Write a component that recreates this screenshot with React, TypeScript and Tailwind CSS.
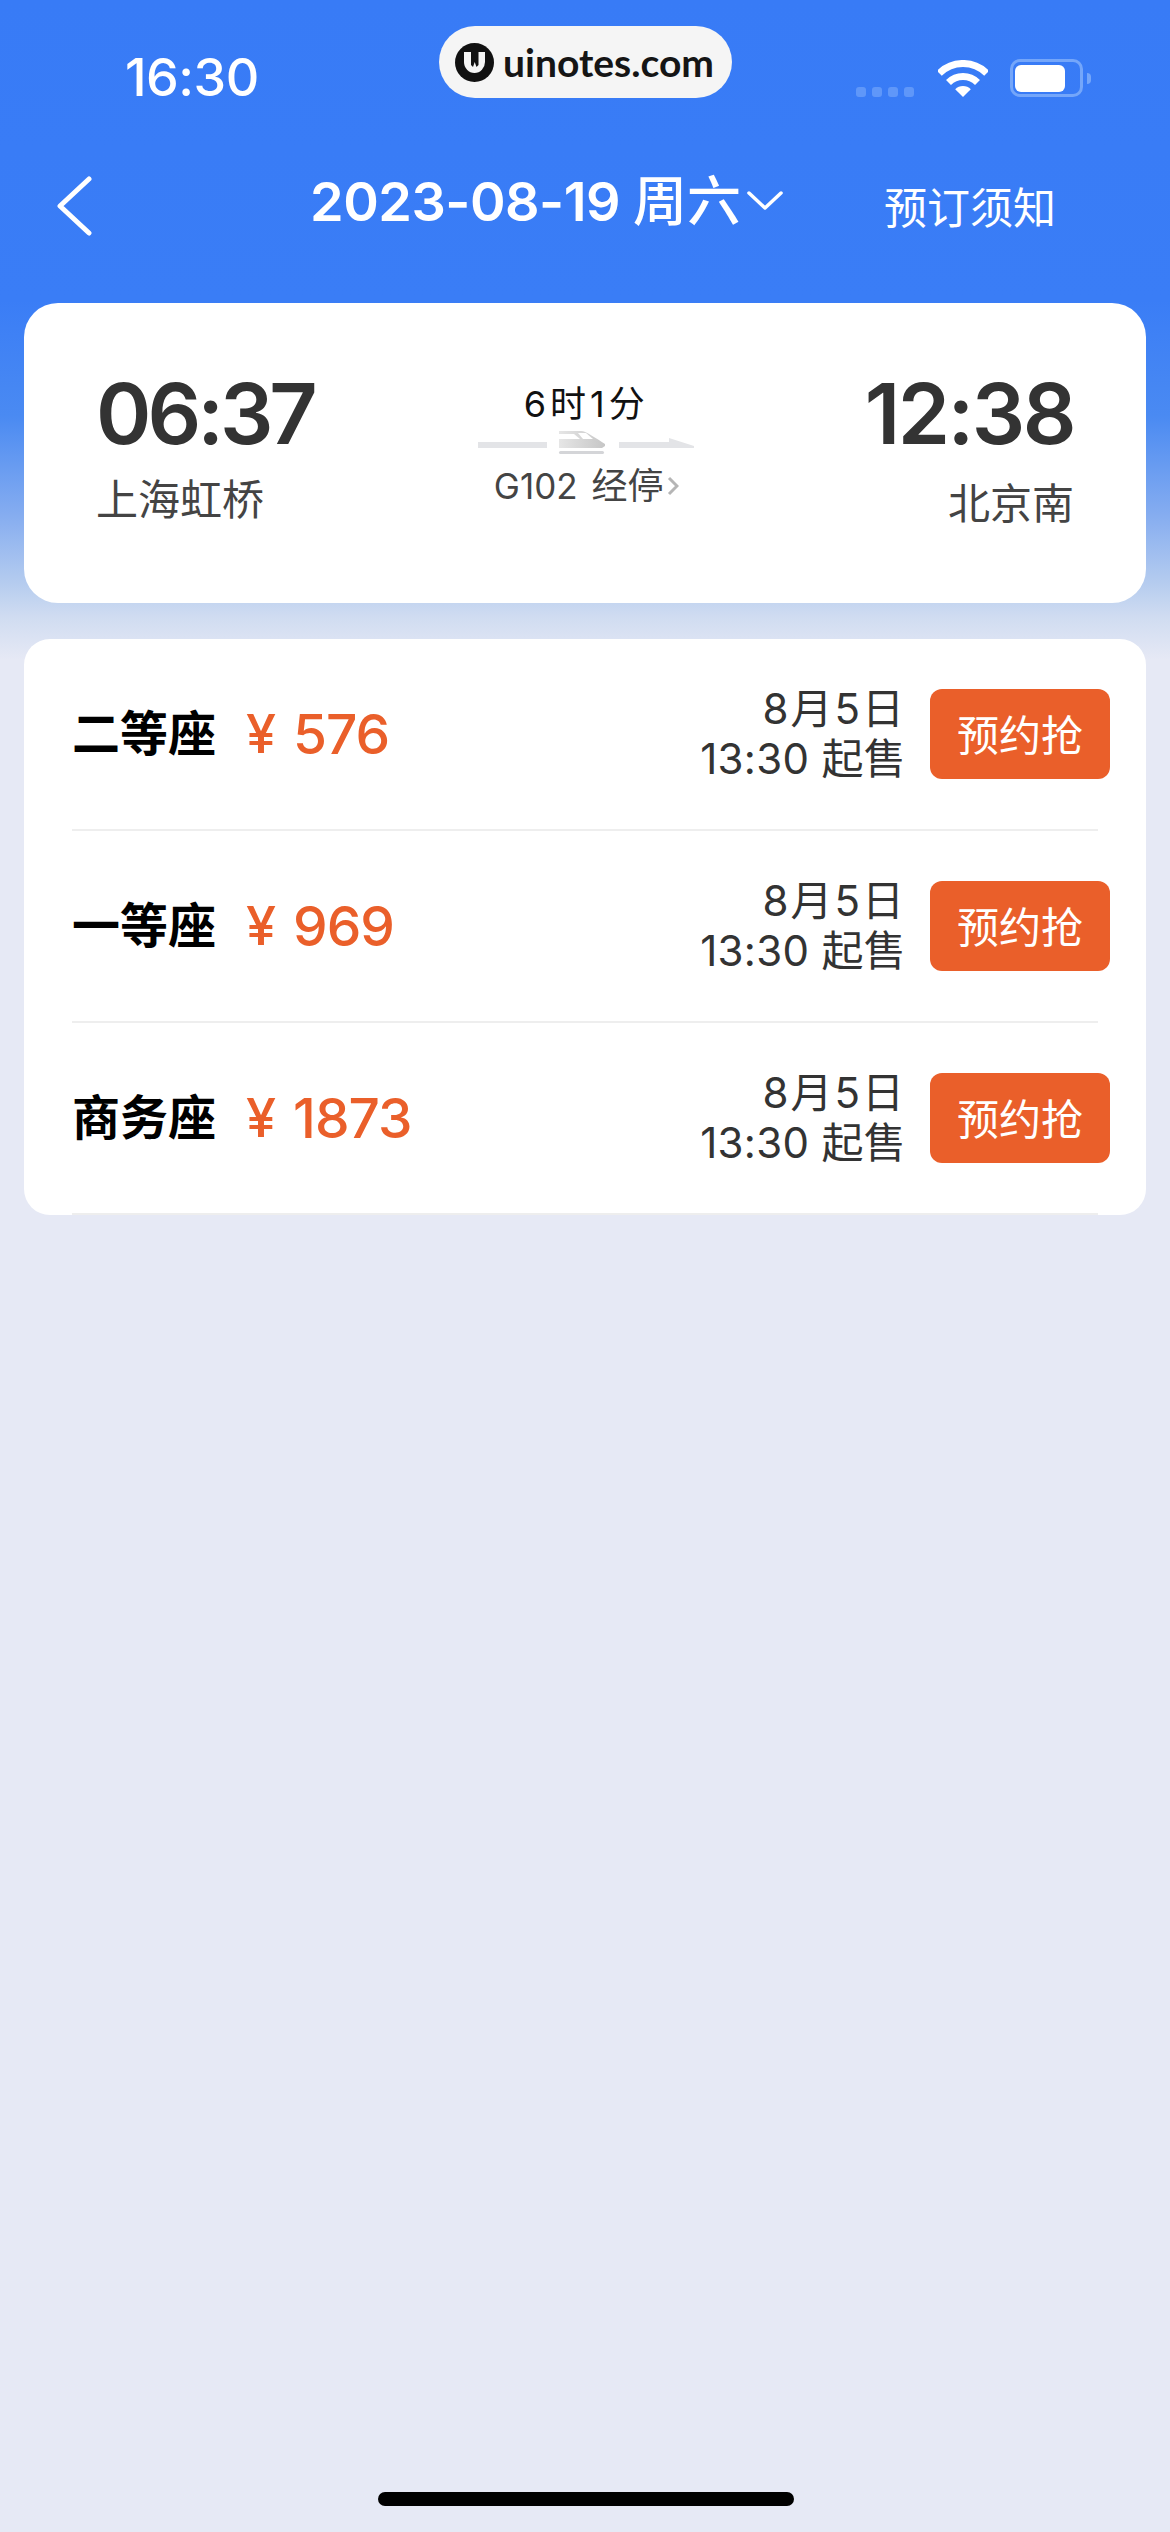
const seats = [
  { name: "二等座", price: "576" },
  { name: "一等座", price: "969" },
  { name: "商务座", price: "1873" },
];

function WifiIcon() {
  return (
    <svg width="50" height="37" viewBox="0 0 50 37" fill="none" stroke="white" strokeWidth="7">
      <path d="M1.3 13.3a33.5 33.5 0 0 1 47.4 0" />
      <path d="M10.5 22.5a20.5 20.5 0 0 1 29 0" />
      <path d="M25 37 17.2 29.2a11 11 0 0 1 15.6 0Z" fill="white" stroke="none" />
    </svg>
  );
}

function TrainIcon() {
  return (
    <svg width="216" height="24" viewBox="0 0 216 24">
      <defs>
        <linearGradient id="train-body" x1="0" x2="1" y1="0" y2="0">
          <stop offset="0" stopColor="#e6e6e6" />
          <stop offset="1" stopColor="#c6c6c6" />
        </linearGradient>
      </defs>
      <rect x="0" y="11" width="69" height="6" fill="#e3e4e7" />
      <path d="M81 0h22c5 0 16 8 24 13v2l-3 2H81Z" fill="url(#train-body)" />
      <path d="M81 3h15l6 5H81Z" fill="#fff" />
      <path d="M100 2h8l7 6h-10Z" fill="#fff" />
      <rect x="81" y="20" width="45" height="3" rx="1.5" fill="#d4d5d8" />
      <path d="M141 11h50V7l25 8v2h-75Z" fill="#e3e4e7" />
    </svg>
  );
}

function LogoMark() {
  return (
    <svg width="39" height="39" viewBox="0 0 39 39">
      <circle cx="19.5" cy="19.5" r="19.5" fill="#111" />
      <path d="M9 9h21v10a10.500 11 0 0 1-21 0Z" fill="#f5f5f5" />
      <path d="M16 9h7.500v13l-2 2-1.800-5-1.700 5-2-2Z" fill="#111" />
    </svg>
  );
}

export default function App() {
  return (
    <div className="relative flex h-[2532px] w-[1170px] flex-col overflow-hidden bg-[linear-gradient(180deg,#387bf6_0px,#3a7df6_300px,#4a8af2_416px,#86adf0_516px,#b5ccef_583px,#d0dcf1_617px,#e6e9f5_660px)] font-['Inter','Noto_Sans_CJK_SC',sans-serif]">
      {/* watermark */}
      <div className="absolute left-[439px] top-[26px] flex h-[72px] w-[293px] items-center gap-[9px] rounded-full bg-[#f5f5f5] pl-[16px]">
        <LogoMark />
        <span className="font-['Lato',sans-serif] text-[39px] font-bold leading-none text-[#151515]">uinotes.com</span>
      </div>

      {/* status bar */}
      <div className="flex h-[150px] items-start justify-between pl-[125px] pr-[79px] pt-[52px]">
        <span className="text-[52px] font-medium leading-[52px] tracking-[-0.5px] text-white">16:30</span>
        <div className="flex items-end pt-[7px]">
          <div className="flex gap-[6px]">
            {[0, 1, 2, 3].map((i) => (
              <div key={i} className="h-[10px] w-[10px] rounded-[3px] bg-[#5f97f9]" />
            ))}
          </div>
          <div className="ml-[24px]">
            <WifiIcon />
          </div>
          <div className="ml-[22px] flex h-[38px] w-[73px] items-center rounded-[10px] border-[3px] border-[#74a6fa] pl-[2px]">
            <div className="h-[27px] w-[50px] rounded-[6px] bg-white" />
          </div>
          <div className="mb-[13px] ml-[4px] h-[11px] w-[4px] rounded-r-full bg-[#74a6fa]" />
        </div>
      </div>

      {/* header */}
      <div className="flex h-[153px] items-start pl-[56px] pt-[26px]">
        <svg width="36" height="60" viewBox="0 0 36 60" fill="none" stroke="white" strokeWidth="5" strokeLinecap="round" strokeLinejoin="round">
          <path d="M33 3 4 30l29 27" />
        </svg>
        <div className="ml-[218px] -mt-[6px] flex items-start text-[54px] font-semibold leading-[64px] text-white">
          <span className="tracking-[-0.5px]">2023-08-19</span>
          <span className="ml-[13px] font-medium">周六</span>
          <svg className="ml-[6px] mt-[21px]" width="36" height="20" viewBox="0 0 36 20" fill="none" stroke="white" strokeWidth="3.500" strokeLinecap="round" strokeLinejoin="round">
            <path d="M2 2l16 15L34 2" />
          </svg>
        </div>
        <span className="ml-[101px] mt-[2px] text-[43px] leading-[60px] text-white">预订须知</span>
      </div>

      {/* train card */}
      <div className="mx-6 flex h-[300px] justify-between rounded-[34px] bg-white pl-[72px] pr-[72px] pt-[66px] text-[#333]">
        <div className="flex flex-col">
          <span className="text-[84px] font-semibold leading-[90px] tracking-[-4px]">06:37</span>
          <span className="mt-[13px] text-[42px] leading-[56px] text-[#444]">上海虹桥</span>
        </div>
        <div className="mr-[6px] flex flex-col items-center pt-[10px]">
          <span className="text-[36px] leading-[50px] tracking-[4px] text-[#111]">6时1分</span>
          <div className="mt-[2px]">
            <TrainIcon />
          </div>
          <div className="mt-[8px] flex items-center">
            <span className="text-[35px] leading-[46px] text-[#444]">G102</span>
            <span className="ml-[14px] text-[36px] leading-[46px] text-[#444]">经停</span>
            <svg className="ml-[3px]" width="12" height="20" viewBox="0 0 12 20" fill="none" stroke="#b5b5b5" strokeWidth="3">
              <path d="M2 2l8 8-8 8" />
            </svg>
          </div>
        </div>
        <div className="flex flex-col items-end">
          <span className="text-[84px] font-semibold leading-[90px] tracking-[-2.500px]">12:38</span>
          <span className="mt-[17px] text-[42px] leading-[56px] text-[#444]">北京南</span>
        </div>
      </div>

      {/* seat list */}
      <div className="mx-6 mt-9 flex h-[576px] flex-col rounded-[26px] bg-white px-12">
        {seats.map((seat) => (
          <div key={seat.name} className="flex h-[192px] items-center border-b-2 border-[#eeeeee]">
            <span className="w-[174px] text-[48px] font-bold leading-none text-black">{seat.name}</span>
            <span className="text-[54px] font-medium leading-none text-[#ea5f2a]">¥</span>
            <span className="ml-[17px] text-[55px] font-medium leading-none tracking-[-1px] text-[#ea5f2a]">{seat.price}</span>
            <div className="ml-auto flex flex-col items-end text-[42px] leading-[50px] text-[#333]">
              <span className="tracking-[2px]">8月5日</span>
              <span className="tracking-[0.3px]">13:30 起售</span>
            </div>
            <div className="ml-[24px] mr-[-12px] flex h-[90px] w-[180px] items-center justify-center rounded-[12px] bg-[#ea5f2a] pt-[3px] text-[42px] text-white">
              预约抢
            </div>
          </div>
        ))}
      </div>

      {/* home indicator */}
      <div className="mt-auto mb-[26px] ml-[378px] h-[14px] w-[416px] rounded-full bg-black" />
    </div>
  );
}
